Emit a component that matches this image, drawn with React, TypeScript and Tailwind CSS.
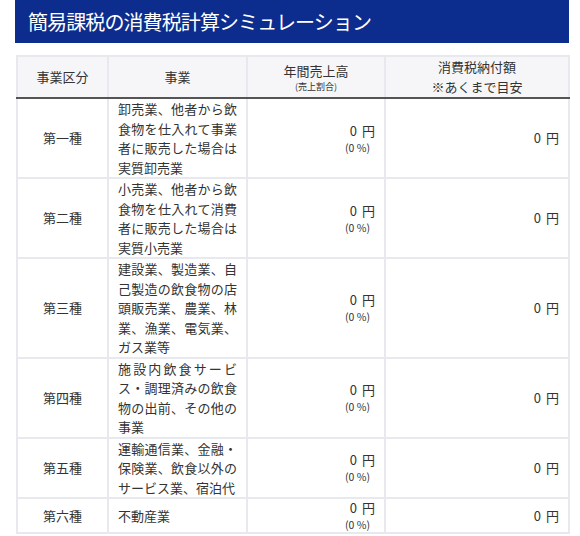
import React from 'react';

const ROWS = [
    { kind: '第一種', desc: '卸売業、他者から飲食物を仕入れて事業者に販売した場合は実質卸売業' },
    { kind: '第二種', desc: '小売業、他者から飲食物を仕入れて消費者に販売した場合は実質小売業' },
    { kind: '第三種', desc: '建設業、製造業、自己製造の飲食物の店頭販売業、農業、林業、漁業、電気業、ガス業等' },
    { kind: '第四種', desc: '施設内飲食サービス・調理済みの飲食物の出前、その他の事業' },
    { kind: '第五種', desc: '運輸通信業、金融・保険業、飲食以外のサービス業、宿泊代' },
    { kind: '第六種', desc: '不動産業' },
];

const cell = 'border-2 border-[#e8e8ef] align-middle';

const Yen: React.FC = () => (
    <>
        <span>0</span>
        <span className="ml-[5px]">円</span>
    </>
);

const App: React.FC = () => {
    return (
        <div className="bg-white min-h-screen text-[#333] [font-family:'Noto_Sans_CJK_JP','Noto_Sans',sans-serif]">
            <div className="ml-[15px] w-[554px] h-[43px] bg-[#0c2d8d] flex items-center pl-[13px]">
                <h1 className="text-white text-[20px] leading-none tracking-[-0.9px]">簡易課税の消費税計算シミュレーション</h1>
            </div>

            <table className="ml-[16px] mt-[12px] w-[552px] table-fixed border-collapse text-[13px]">
                <colgroup>
                    <col className="w-[91px]" />
                    <col className="w-[139px]" />
                    <col className="w-[138px]" />
                    <col className="w-[184px]" />
                </colgroup>
                <thead>
                    <tr className="bg-[#f6f6f8] h-[40px]">
                        <th className={`${cell} border-b-[#555] font-normal text-center`}>事業区分</th>
                        <th className={`${cell} border-b-[#555] font-normal text-center`}>事業</th>
                        <th className={`${cell} border-b-[#555] font-normal text-center`}>
                            <div className="leading-[19px]">年間売上高</div>
                            <div className="text-[9px] leading-[14px]">(売上割合)</div>
                        </th>
                        <th className={`${cell} border-b-[#555] font-normal text-center leading-[20px]`}>
                            <div>消費税納付額</div>
                            <div>※あくまで目安</div>
                        </th>
                    </tr>
                </thead>
                <tbody>
                    {ROWS.map((row) => (
                        <tr key={row.kind}>
                            <td className={`${cell} text-center`}>{row.kind}</td>
                            <td className={`${cell} px-[9px] text-justify leading-[19.5px]`}>{row.desc}</td>
                            <td className={`${cell} pr-[9px] text-right`}>
                                <div className="leading-[18px]"><Yen /></div>
                                <div className="text-[10.5px] leading-[15px] pr-[5px]">(0 %)</div>
                            </td>
                            <td className={`${cell} pr-[9px] text-right`}><Yen /></td>
                        </tr>
                    ))}
                </tbody>
            </table>
        </div>
    );
};

export default App;
